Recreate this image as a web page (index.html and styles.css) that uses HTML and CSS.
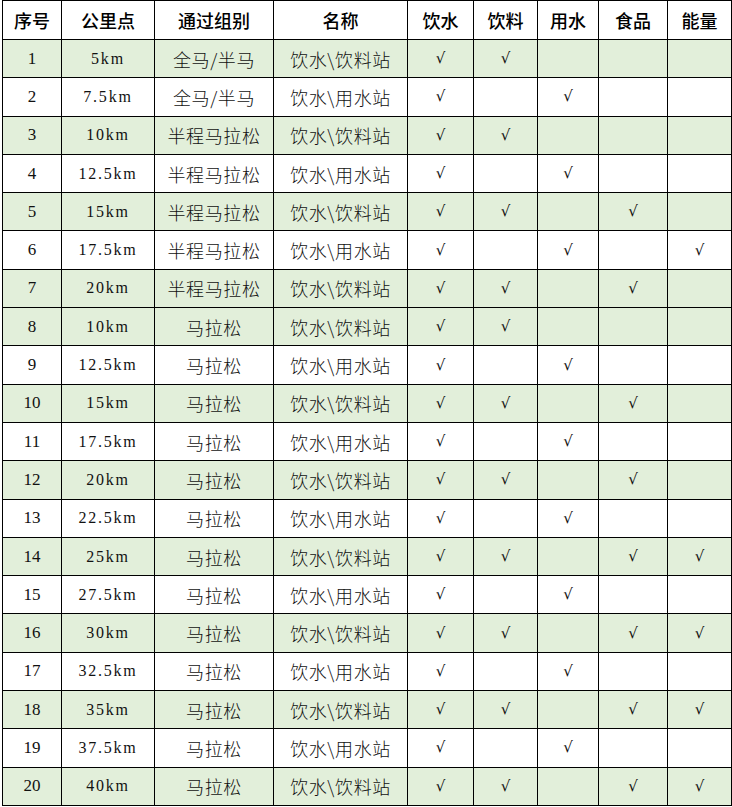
FILE: index.html
```html
<!DOCTYPE html>
<html lang="zh">
<head>
<meta charset="utf-8">
<title>补给站</title>
<link rel="stylesheet" href="styles.css">
</head>
<body>
<div class="wrap">
<table class="grid">
<colgroup>
<col class="c-no"><col class="c-km"><col class="c-grp"><col class="c-name"><col class="c-a"><col class="c-b"><col class="c-c"><col class="c-d"><col class="c-e">
</colgroup>
<thead>
<tr class="head"><th>序号</th><th>公里点</th><th>通过组别</th><th>名称</th><th>饮水</th><th>饮料</th><th>用水</th><th>食品</th><th>能量</th></tr>
</thead>
<tbody>
<tr class="g"><td class="num">1</td><td class="km">5km</td><td class="cn">全马/半马</td><td class="cn">饮水\饮料站</td><td class="ck">√</td><td class="ck">√</td><td></td><td></td><td></td></tr>
<tr><td class="num">2</td><td class="km">7.5km</td><td class="cn">全马/半马</td><td class="cn">饮水\用水站</td><td class="ck">√</td><td></td><td class="ck">√</td><td></td><td></td></tr>
<tr class="g"><td class="num">3</td><td class="km">10km</td><td class="cn">半程马拉松</td><td class="cn">饮水\饮料站</td><td class="ck">√</td><td class="ck">√</td><td></td><td></td><td></td></tr>
<tr><td class="num">4</td><td class="km">12.5km</td><td class="cn">半程马拉松</td><td class="cn">饮水\用水站</td><td class="ck">√</td><td></td><td class="ck">√</td><td></td><td></td></tr>
<tr class="g"><td class="num">5</td><td class="km">15km</td><td class="cn">半程马拉松</td><td class="cn">饮水\饮料站</td><td class="ck">√</td><td class="ck">√</td><td></td><td class="ck">√</td><td></td></tr>
<tr><td class="num">6</td><td class="km">17.5km</td><td class="cn">半程马拉松</td><td class="cn">饮水\用水站</td><td class="ck">√</td><td></td><td class="ck">√</td><td></td><td class="ck">√</td></tr>
<tr class="g"><td class="num">7</td><td class="km">20km</td><td class="cn">半程马拉松</td><td class="cn">饮水\饮料站</td><td class="ck">√</td><td class="ck">√</td><td></td><td class="ck">√</td><td></td></tr>
<tr class="g"><td class="num">8</td><td class="km">10km</td><td class="cn">马拉松</td><td class="cn">饮水\饮料站</td><td class="ck">√</td><td class="ck">√</td><td></td><td></td><td></td></tr>
<tr><td class="num">9</td><td class="km">12.5km</td><td class="cn">马拉松</td><td class="cn">饮水\用水站</td><td class="ck">√</td><td></td><td class="ck">√</td><td></td><td></td></tr>
<tr class="g"><td class="num">10</td><td class="km">15km</td><td class="cn">马拉松</td><td class="cn">饮水\饮料站</td><td class="ck">√</td><td class="ck">√</td><td></td><td class="ck">√</td><td></td></tr>
<tr><td class="num">11</td><td class="km">17.5km</td><td class="cn">马拉松</td><td class="cn">饮水\用水站</td><td class="ck">√</td><td></td><td class="ck">√</td><td></td><td></td></tr>
<tr class="g"><td class="num">12</td><td class="km">20km</td><td class="cn">马拉松</td><td class="cn">饮水\饮料站</td><td class="ck">√</td><td class="ck">√</td><td></td><td class="ck">√</td><td></td></tr>
<tr><td class="num">13</td><td class="km">22.5km</td><td class="cn">马拉松</td><td class="cn">饮水\用水站</td><td class="ck">√</td><td></td><td class="ck">√</td><td></td><td></td></tr>
<tr class="g"><td class="num">14</td><td class="km">25km</td><td class="cn">马拉松</td><td class="cn">饮水\饮料站</td><td class="ck">√</td><td class="ck">√</td><td></td><td class="ck">√</td><td class="ck">√</td></tr>
<tr><td class="num">15</td><td class="km">27.5km</td><td class="cn">马拉松</td><td class="cn">饮水\用水站</td><td class="ck">√</td><td></td><td class="ck">√</td><td></td><td></td></tr>
<tr class="g"><td class="num">16</td><td class="km">30km</td><td class="cn">马拉松</td><td class="cn">饮水\饮料站</td><td class="ck">√</td><td class="ck">√</td><td></td><td class="ck">√</td><td class="ck">√</td></tr>
<tr><td class="num">17</td><td class="km">32.5km</td><td class="cn">马拉松</td><td class="cn">饮水\用水站</td><td class="ck">√</td><td></td><td class="ck">√</td><td></td><td></td></tr>
<tr class="g"><td class="num">18</td><td class="km">35km</td><td class="cn">马拉松</td><td class="cn">饮水\饮料站</td><td class="ck">√</td><td class="ck">√</td><td></td><td class="ck">√</td><td class="ck">√</td></tr>
<tr><td class="num">19</td><td class="km">37.5km</td><td class="cn">马拉松</td><td class="cn">饮水\用水站</td><td class="ck">√</td><td></td><td class="ck">√</td><td></td><td></td></tr>
<tr class="g"><td class="num">20</td><td class="km">40km</td><td class="cn">马拉松</td><td class="cn">饮水\饮料站</td><td class="ck">√</td><td class="ck">√</td><td></td><td class="ck">√</td><td class="ck">√</td></tr>
</tbody>
</table>
</div>
</body>
</html>
```
FILE: styles.css
```css
html, body {
  margin: 0;
  padding: 0;
  background: #ffffff;
}
.wrap {
  padding: 0 0 0 2px;
}
.grid {
  border-collapse: collapse;
  table-layout: fixed;
  width: 729px;
  color: #111;
  font-family: "Noto Sans CJK SC", sans-serif;
}
.c-no { width: 59px; }
.c-km { width: 93px; }
.c-grp { width: 119px; }
.c-name { width: 134px; }
.c-a { width: 66px; }
.c-b { width: 64px; }
.c-c { width: 61px; }
.c-d { width: 69px; }
.c-e { width: 64px; }
.grid th, .grid td {
  border: 1.5px solid #000;
  padding: 0;
  text-align: center;
  vertical-align: middle;
}
.head th {
  height: 38px;
  font-size: 18px;
  font-weight: 500;
  color: #000;
}
.grid tbody tr {
  height: 38.3px;
}
.grid tr.g td {
  background: #e2efda;
}
.num {
  font-family: "Liberation Serif", serif;
  font-size: 17px;
}
.km {
  font-family: "Liberation Serif", serif;
  font-size: 16px;
  letter-spacing: 1.8px;
}
.cn {
  font-size: 18px;
  font-weight: 300;
  letter-spacing: 0.6px;
  line-height: 1;
  padding-bottom: 5px;
  color: #111;
}
.ck {
  font-family: "DejaVu Sans", sans-serif;
  font-size: 15px;
  color: #111;
  line-height: 1;
}
```
